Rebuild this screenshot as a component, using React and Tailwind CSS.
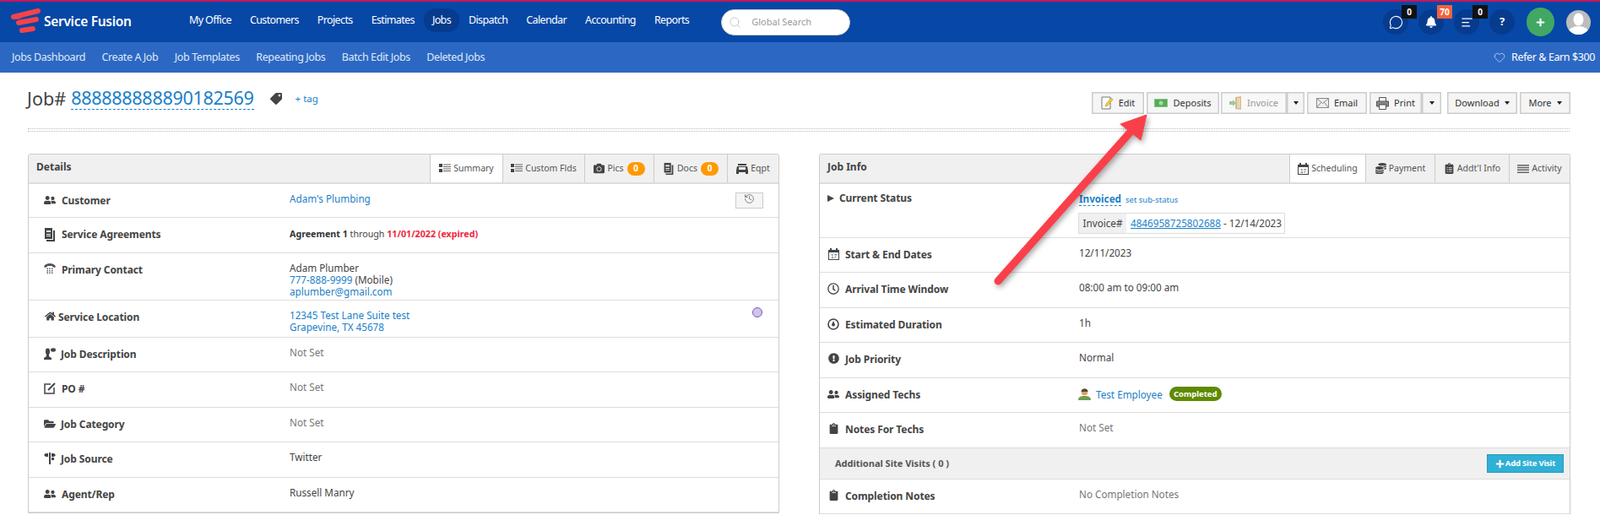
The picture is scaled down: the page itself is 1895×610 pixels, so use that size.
import { FaBell, FaCamera, FaClipboard, FaClipboardList, FaCoins, FaExclamationCircle, FaFolderOpen, FaHome, FaPlus, FaRegClock, FaTag, FaUserFriends } from "react-icons/fa";
import { History, Search, Heart, MessageCircle, AlignLeft } from "lucide-react";

const navItems = ["My Office", "Customers", "Projects", "Estimates", "Jobs", "Dispatch", "Calendar", "Accounting", "Reports"];
const subItems = ["Jobs Dashboard", "Create A Job", "Job Templates", "Repeating Jobs", "Batch Edit Jobs", "Deleted Jobs"];

function Logo() {
  return (
    <svg width="36" height="30" viewBox="0 0 36 30" className="shrink-0">
      <path d="M3 10 L32 3" stroke="#f4434a" strokeWidth="6" strokeLinecap="round" />
      <path d="M5 13 L3 10 L14 12 Z" fill="#f4434a" />
      <path d="M9 17 L30 13" stroke="#f4434a" strokeWidth="6" strokeLinecap="round" />
      <path d="M13 26 L26 24" stroke="#f4434a" strokeWidth="6" strokeLinecap="round" />
    </svg>
  );
}

function ListIcon() {
  return (
    <svg width="14" height="11" viewBox="0 0 14 11" fill="#444">
      <path d="M0 0h4v4H0zM0 6h4v4H0z" />
      <path d="M5 .500h9v1H5zM5 3h9v1H5zM5 5.500h9v1H5zM5 8h9v1H5z" fill="#666" />
    </svg>
  );
}

function NewspaperIcon({ className = "" }) {
  return (
    <svg width="14" height="16" viewBox="0 0 14 16" className={className} fill="#444">
      <path d="M1 0h9v13H1z" />
      <path d="M11 3h2v13H3v-2h8z" />
      <path d="M3 3h5v2H3zM3 7h5v1H3zM3 9h5v1H3z" fill="#fff" />
    </svg>
  );
}

function PhoneIcon() {
  return (
    <svg width="14" height="14" viewBox="0 0 14 14" fill="#555">
      <path d="M0 4c1-3 4-4 7-4s6 1 7 4l-1 1-3-1V3H4v1L1 5z" />
      <path d="M3.500 5.500h1.500v1.500H3.500zM6.200 5.500h1.500v1.500H6.200zM9 5.500h1.500v1.500H9zM3.500 8h1.500v1.500H3.500zM6.200 8h1.500v1.500H6.200zM9 8h1.500v1.500H9zM3.500 10.500h1.500V12H3.500zM6.200 10.500h1.500V12H6.200zM9 10.500h1.500V12H9z" />
    </svg>
  );
}

function SpeakerIcon() {
  return (
    <svg width="14" height="14" viewBox="0 0 14 14" fill="#444">
      <path d="M0 14v-2l3-2V8L2 6V3a2.500 2.500 0 0 1 5 0v3L6 8v2l3 2v2z" />
      <ellipse cx="11" cy="2.500" rx="3" ry="2.200" />
    </svg>
  );
}

function EditBoxIcon() {
  return (
    <svg width="14" height="14" viewBox="0 0 14 14" fill="none" stroke="#444" strokeWidth="1.500">
      <path d="M8 2H1v11h11V6" />
      <path d="M5 9l8-8" strokeWidth="2" />
    </svg>
  );
}

function SignIcon() {
  return (
    <svg width="14" height="14" viewBox="0 0 14 14" fill="#444">
      <path d="M6 0h2v14H6z" />
      <path d="M0 3l2-2h3v4H2zM9 1h3l2 2-2 2H9zM9 6h3v3H9z" />
    </svg>
  );
}

function MachineIcon() {
  return (
    <svg width="14" height="12" viewBox="0 0 14 12" fill="#444">
      <path d="M2 0h10v2H2zM1 3h12l1 5v4h-3v-2H3v2H0V8z" />
      <path d="M3 4h8v3H3z" fill="#f0f0f0" />
    </svg>
  );
}

function CalendarIcon() {
  return (
    <svg width="13" height="14" viewBox="0 0 13 14">
      <path d="M0 2h13v12H0z" fill="#444" />
      <path d="M2 0h2v3H2zM9 0h2v3H9z" fill="#444" />
      <path d="M1 5h11v8H1z" fill="#fff" />
      <text x="6.500" y="12" fontSize="6.500" fontFamily="Liberation Sans" textAnchor="middle" fill="#444">17</text>
    </svg>
  );
}

function DurationIcon() {
  return (
    <svg width="14" height="14" viewBox="0 0 14 14" fill="none">
      <circle cx="7" cy="7" r="6" stroke="#444" strokeWidth="1.600" />
      <path d="M7 3l2 4.500a2 2 0 1 1-4 0z" fill="#444" />
    </svg>
  );
}

function ActivityIcon() {
  return (
    <svg width="14" height="10" viewBox="0 0 14 10" fill="#666">
      <path d="M0 0h14v1.500H0zM0 2.800h14v1.500H0zM0 5.600h14v1.500H0zM0 8.400h14v1.500H0z" />
    </svg>
  );
}

function Caret() {
  return <span className="inline-block w-0 h-0 border-x-[3.500px] border-x-transparent border-t-[4px] border-t-[#222]" />;
}

function BtnEditIcon() {
  return (
    <svg width="15" height="16" viewBox="0 0 15 16">
      <path d="M1 1h10v14H1z" fill="#fff" stroke="#777" />
      <path d="M5 12l1-3 6-7 2 2-6 7z" fill="#f2c94c" stroke="#b88a1a" strokeWidth="0.600" />
    </svg>
  );
}

function BtnDepositIcon() {
  return (
    <svg width="16" height="10" viewBox="0 0 16 10">
      <path d="M0 0h16v10H0z" fill="#7fc77f" />
      <path d="M1 1h14v8H1z" fill="#58a958" />
      <circle cx="8" cy="5" r="2.500" fill="#a3dca3" />
    </svg>
  );
}

function BtnInvoiceIcon() {
  return (
    <svg width="15" height="16" viewBox="0 0 15 16">
      <path d="M7 1l7-1v16l-7-1z" fill="#d9b98c" />
      <path d="M9 2h4v12H9z" fill="#e8d5b5" />
      <path d="M0 6h4V4l4 4-4 4v-2H0z" fill="#9cc79c" />
    </svg>
  );
}

function BtnEmailIcon() {
  return (
    <svg width="15" height="12" viewBox="0 0 15 12" fill="#eee" stroke="#888">
      <path d="M.500.500h14v11H.500z" />
      <path d="M.500.500l7 6 7-6M.500 11.500l5-6M14.500 11.500l-5-6" fill="none" />
    </svg>
  );
}

function BtnPrintIcon() {
  return (
    <svg width="15" height="15" viewBox="0 0 15 15" fill="none" stroke="#555">
      <path d="M3.500 5V.500h8V5" />
      <path d="M.500 5h14v6h-3V9h-8v2h-3z" fill="#888" />
      <path d="M3.500 9h8v5.500h-8z" fill="#fff" />
    </svg>
  );
}

function ActionBtn({ icon, label, muted, className = "" }) {
  return (
    <button className={`h-[26px] flex items-center justify-center gap-[6px] border border-[#ccc] shadow-[inset_0_0_0_0.5px_#ccc] ${muted ? "bg-[#f8f8f8] text-[#999]" : "bg-[#f5f5f5] text-[#333]"} ${className}`}>
      {icon}
      {label && <span>{label}</span>}
    </button>
  );
}

function NavBubble({ badge, badgeColor, children }) {
  return (
    <div className="relative w-[30px] h-[30px] rounded-full bg-[#063b8e] flex items-center justify-center text-white">
      {children}
      {badge && (
        <span className={`absolute top-[-5px] left-[22px] w-[18px] h-[16px] flex items-center justify-center text-[10px] font-bold text-white ${badgeColor}`}>
          {badge}
        </span>
      )}
    </div>
  );
}

function Tab({ active, width, icon, label, badge }) {
  return (
    <div className={`${width} h-full flex items-center justify-center gap-[3px] border-l border-[#ccc] text-[10.500px] text-[#555] ${active ? "bg-white" : ""}`}>
      {icon}
      <span>{label}</span>
      {badge && <span className="w-[21px] h-[16px] rounded-full bg-[#f90] text-white text-[10px] font-bold flex items-center justify-center ml-[1px]">{badge}</span>}
    </div>
  );
}

function PanelHeader({ title, children }) {
  return (
    <div className="h-[35px] bg-[#f0f0f0] border-b-[2px] border-[#ddd] flex justify-between rounded-t-[3px]">
      <div className="pl-[9px] pt-[6px] text-[12px] font-bold text-[#444]">{title}</div>
      <div className="flex">{children}</div>
    </div>
  );
}

function Row({ icon, label, height, gap = "gap-[7px]", labelWidth = "w-[291px]", pad = "pl-[18px]", children, right }) {
  return (
    <div className={`${height} border-b border-[#ddd] flex items-start ${pad}`}>
      <div className={`${labelWidth} flex items-start ${gap} pt-[11px] shrink-0`}>
        <span className="w-[14px] flex justify-center shrink-0 mt-[1px]">{icon}</span>
        <span className="text-[12px] tracking-[-0.1px] font-bold text-[#444] leading-[18px]">{label}</span>
      </div>
      <div className="flex-1 pt-[10px] text-[11.700px] leading-[14px] text-[#444]">{children}</div>
      {right}
    </div>
  );
}

function NotSet({ children = "Not Set" }) {
  return <span className="text-[#777]">{children}</span>;
}

function LinkText({ children }) {
  return <span className="text-[#1b80c8]">{children}</span>;
}

export default function App() {
  return (
    <div className="relative h-[610px] overflow-hidden bg-white font-['Open_Sans',sans-serif]">
      <div className="h-[2px] bg-[#c2185b]" />

      <div className="h-[48px] bg-[#0747a6] flex items-center text-white">
        <div className="ml-[13px] w-[39px] mt-[-3px]">
          <Logo />
        </div>
        <div className="w-[161px] text-[15.500px] font-semibold tracking-[-0.3px] mt-[-1px]">Service Fusion</div>
        <nav className="flex items-center text-[12.500px] tracking-[-0.63px] mt-[-4px]">
          {navItems.map((item) => (
            <span
              key={item}
              className={`whitespace-nowrap ${item === "Jobs" ? "bg-[#063b8e] rounded-full px-[10px] py-[5px]" : "mx-[11px]"}`}
            >
              {item}
            </span>
          ))}
        </nav>
        <div className="ml-[27px] w-[153px] h-[31px] rounded-full bg-white border border-[#ccc] flex items-center pl-[8px] gap-[12px]">
          <Search size={15} strokeWidth={1} className="text-[#aaa]" />
          <span className="text-[11px] text-[#999]">Global Search</span>
        </div>
        <div className="ml-auto flex items-center mr-[11px]">
          <div className="flex gap-[12px] mr-[14px]">
            <NavBubble badge="0" badgeColor="bg-[#111]">
              <MessageCircle size={17} strokeWidth={1.5} />
            </NavBubble>
            <NavBubble badge="70" badgeColor="bg-[#f4623a]">
              <FaBell size={14} />
            </NavBubble>
            <NavBubble badge="0" badgeColor="bg-[#111]">
              <AlignLeft size={15} strokeWidth={2} />
            </NavBubble>
            <NavBubble>
              <span className="text-[13px] font-bold">?</span>
            </NavBubble>
          </div>
          <div className="w-[33px] h-[34px] rounded-full bg-[#41a863] flex items-center justify-center">
            <FaPlus size={11} />
          </div>
          <div className="ml-[14px] w-[29px] h-[29px] rounded-full bg-[#bdbdbd] overflow-hidden">
            <svg width="29" height="29" viewBox="0 0 29 29" fill="#fff">
              <ellipse cx="14.500" cy="11" rx="6" ry="7.500" />
              <ellipse cx="14.500" cy="27" rx="12" ry="8" />
            </svg>
          </div>
        </div>
      </div>

      <div className="h-[36px] bg-[#2c68c3] flex items-center pl-[14px] pr-[6px] text-[#dfe8f7] text-[12.500px] tracking-[-0.4px]">
        <div className="flex gap-[19.500px]">
          {subItems.map((item) => (
            <span key={item}>{item}</span>
          ))}
        </div>
        <div className="ml-auto flex items-center gap-[7px] text-white">
          <Heart size={14} strokeWidth={1} />
          <span>Refer &amp; Earn $300</span>
        </div>
      </div>

      <div className="h-[66px] pl-[32px] pr-[35px] flex justify-between items-start">
        <div className="flex items-center mt-[17px]">
          <span className="text-[21.600px] text-[#444] leading-[26px] font-['Liberation_Sans',sans-serif] mr-[6px]">Job#</span>
          <span className="text-[21.600px] tracking-[-0.33px] text-[#1b80c8] leading-[26px] font-['Liberation_Sans',sans-serif] border-b border-dashed border-[#1b80c8]">888888888890182569</span>
          <FaTag size={14} className="text-[#444] ml-[19px] scale-x-[-1]" />
          <span className="text-[11.500px] text-[#1b80c8] ml-[16px]">+ tag</span>
        </div>
        <div className="flex mt-[23px] text-[11px] font-['Liberation_Sans',sans-serif]">
          <ActionBtn icon={<BtnEditIcon />} label="Edit" className="w-[62px]" />
          <ActionBtn icon={<BtnDepositIcon />} label="Deposits" className="w-[86px] ml-[3px]" />
          <ActionBtn icon={<BtnInvoiceIcon />} label="Invoice" muted className="w-[78px] ml-[2px]" />
          <ActionBtn icon={<Caret />} className="w-[21px]" />
          <ActionBtn icon={<BtnEmailIcon />} label="Email" className="w-[71px] ml-[3px]" />
          <ActionBtn icon={<BtnPrintIcon />} label="Print" className="w-[62px] ml-[3px]" />
          <ActionBtn icon={<Caret />} className="w-[23px]" />
          <ActionBtn icon={<Caret />} label="Download" className="w-[83px] ml-[7px] flex-row-reverse" />
          <ActionBtn icon={<Caret />} label="More" className="w-[60px] ml-[3px] flex-row-reverse" />
        </div>
      </div>

      <div className="mx-[33px] w-[1826px] h-[4px] border-y border-dotted border-[#bbb]" />

      <div className="mt-[26px] ml-[33px] w-[1827px] grid grid-cols-2 gap-[47px]">
        <section className="border-x-[1.500px] border-t-[1.500px] border-b-[1.500px] border-[#ccc] rounded-t-[3px] h-[426px]">
          <PanelHeader title="Details">
            <Tab active width="w-[86px]" icon={<ListIcon />} label="Summary" />
            <Tab width="w-[97px]" icon={<ListIcon />} label="Custom Flds" />
            <Tab width="w-[82px]" icon={<FaCamera size={13} className="text-[#444]" />} label="Pics" badge="0" />
            <Tab width="w-[87px]" icon={<NewspaperIcon className="scale-90" />} label="Docs" badge="0" />
            <Tab width="w-[61px]" icon={<MachineIcon />} label="Eqpt" />
          </PanelHeader>
          <Row
            height="h-[40px]"
            icon={<FaUserFriends size={14} className="text-[#444]" />}
            label="Customer"
            right={
              <button className="w-[33px] h-[19px] mt-[10px] mr-[18px] bg-[#f5f5f5] border border-[#ccc] flex items-start justify-center text-[#444]">
                <History size={13} strokeWidth={1.200} />
              </button>
            }
          >
            <LinkText>Adam's Plumbing</LinkText>
          </Row>
          <Row height="h-[42px]" icon={<NewspaperIcon />} label="Service Agreements">
            <span className="text-[10.700px] leading-[18px]">
              <b className="text-[#333]">Agreement 1</b> through <b className="text-[#f0263c]">11/01/2022 (expired)</b>
            </span>
          </Row>
          <Row height="h-[56px]" icon={<PhoneIcon />} label="Primary Contact">
            Adam Plumber
            <br />
            <LinkText>777-888-9999</LinkText> (Mobile)
            <br />
            <LinkText>aplumber@gmail.com</LinkText>
          </Row>
          <Row
            height="h-[44px]"
            gap="gap-[3px]"
            icon={<FaHome size={13} className="text-[#444]" />}
            label="Service Location"
            right={<span className="w-[12px] h-[12px] mt-[8px] mr-[19px] rounded-full bg-[#d1c4e9] border border-[#7e57c2]" />}
          >
            <LinkText>12345 Test Lane Suite test</LinkText>
            <br />
            <LinkText>Grapevine, TX 45678</LinkText>
          </Row>
          <Row height="h-[41px]" gap="gap-[6px]" icon={<SpeakerIcon />} label="Job Description">
            <NotSet />
          </Row>
          <Row height="h-[42px]" icon={<EditBoxIcon />} label="PO #">
            <NotSet />
          </Row>
          <Row height="h-[41px]" gap="gap-[6px]" icon={<FaFolderOpen size={14} className="text-[#444]" />} label="Job Category">
            <NotSet />
          </Row>
          <Row height="h-[42px]" gap="gap-[6px]" icon={<SignIcon />} label="Job Source">
            Twitter
          </Row>
          <Row height="h-[41px]" icon={<FaUserFriends size={14} className="text-[#444]" />} label="Agent/Rep">
            Russell Manry
          </Row>
        </section>

        <section className="border-x-[1.500px] border-t-[1.500px] border-[#ccc] rounded-t-[3px]">
          <PanelHeader title="Job Info">
            <Tab active width="w-[90px]" icon={<CalendarIcon />} label="Scheduling" />
            <Tab width="w-[82px]" icon={<FaCoins size={13} className="text-[#444]" />} label="Payment" />
            <Tab width="w-[88px]" icon={<FaClipboardList size={13} className="text-[#444]" />} label="Addt'l Info" />
            <Tab width="w-[72px]" icon={<ActivityIcon />} label="Activity" />
          </PanelHeader>
          <div className="h-[64px] border-b border-[#ddd] flex pl-[9px]">
            <div className="w-[298px] flex items-start gap-[6px] pt-[9px] shrink-0">
              <span className="w-0 h-0 mt-[4px] border-y-[4.500px] border-y-transparent border-l-[8px] border-l-[#444]" />
              <span className="text-[12px] tracking-[-0.1px] font-bold text-[#444] leading-[16px]">Current Status</span>
            </div>
            <div className="pt-[9px] text-[11.700px]">
              <div className="flex items-baseline gap-[5px] leading-[16px]">
                <b className="text-[#1b80c8] border-b border-dashed border-[#1b80c8]">Invoiced</b>
                <span className="text-[9.500px] text-[#1b80c8]">set sub-status</span>
              </div>
              <div className="mt-[7px] h-[25px] w-[245px] border border-[#ddd] flex items-center text-[#444] ml-[-1px] whitespace-nowrap">
                <span className="w-[56px] h-full bg-[#f0f0f0] flex items-center justify-center">Invoice#</span>
                <span className="ml-[5px] text-[#1b80c8] underline">4846958725802688</span>
                <span className="ml-[3px]">- 12/14/2023</span>
              </div>
            </div>
          </div>
          <Row height="h-[41px]" labelWidth="w-[298px]" pad="pl-[9px]" icon={<CalendarIcon />} label="Start & End Dates">
            12/11/2023
          </Row>
          <Row height="h-[42px]" labelWidth="w-[298px]" pad="pl-[9px]" icon={<FaRegClock size={14} className="text-[#444]" />} label="Arrival Time Window">
            08:00 am to 09:00 am
          </Row>
          <Row height="h-[41px]" labelWidth="w-[298px]" pad="pl-[9px]" icon={<DurationIcon />} label="Estimated Duration">
            1h
          </Row>
          <Row height="h-[42px]" labelWidth="w-[298px]" pad="pl-[9px]" icon={<FaExclamationCircle size={13} className="text-[#444]" />} label="Job Priority">
            Normal
          </Row>
          <Row height="h-[41px]" labelWidth="w-[298px]" pad="pl-[9px]" icon={<FaUserFriends size={14} className="text-[#444]" />} label="Assigned Techs">
            <div className="flex items-center gap-[6px] ml-[-1px]">
              <svg width="15" height="14" viewBox="0 0 15 14">
                <path d="M0 14c0-4 3-5 7.500-5S15 10 15 14z" fill="#6f9e4e" />
                <circle cx="7.500" cy="4.500" r="3.800" fill="#d9a066" />
                <path d="M3.500 4c0-5 8-5 8 0z" fill="#5b4630" />
              </svg>
              <LinkText>Test Employee</LinkText>
              <span className="ml-[2px] w-[62px] h-[17px] rounded-full bg-[#5f8a00] text-white text-[9.500px] font-bold flex items-center justify-center">Completed</span>
            </div>
          </Row>
          <Row height="h-[42px]" labelWidth="w-[298px]" pad="pl-[9px]" icon={<FaClipboard size={13} className="text-[#444]" />} label="Notes For Techs">
            <NotSet />
          </Row>
          <div className="h-[37px] bg-[#f0f0f0] border-b border-[#ddd] flex items-center justify-between pl-[18px] pr-[7px]">
            <span className="text-[11px] font-bold text-[#555]">Additional Site Visits ( 0 )</span>
            <button className="w-[91px] h-[22px] bg-[#31b0d5] border border-[#269abc] text-white text-[9.500px] tracking-[-0.2px] font-bold flex items-center justify-center gap-[1px]">
              <FaPlus size={11} />
              Add Site Visit
            </button>
          </div>
          <Row height="h-[41px]" labelWidth="w-[298px]" pad="pl-[9px]" icon={<FaClipboard size={13} className="text-[#444]" />} label="Completion Notes">
            <NotSet>No Completion Notes</NotSet>
          </Row>
        </section>
      </div>

      <svg className="absolute left-0 top-0 pointer-events-none" width="1895" height="610" viewBox="0 0 1895 610">
        <g fill="#f9404a" stroke="#f9404a" strokeLinejoin="round" className="drop-shadow-[2px_3px_3px_rgba(0,0,0,0.35)]">
          <path d="M1182 333 L1340 155" strokeWidth="9" strokeLinecap="round" />
          <path d="M1358 136 L1327 147 L1351 166 Z" strokeWidth="1" />
        </g>
      </svg>
    </div>
  );
}
